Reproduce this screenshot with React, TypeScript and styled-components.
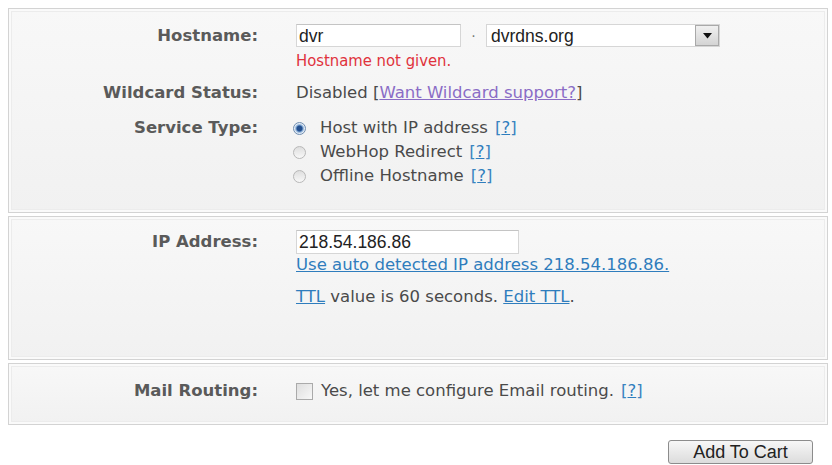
import styled, { createGlobalStyle } from "styled-components";

const GlobalStyle = createGlobalStyle`
  html, body {
    margin: 0;
    padding: 0;
    background: #ffffff;
  }
  body {
    font-family: "DejaVu Sans", Verdana, sans-serif;
    color: #444;
  }
`

const Page = styled.div`
  width: 820px;
  padding: 8px 4px 0 8px;
  display: flex;
  flex-direction: column;
`

const Section = styled.div<{ $top: number; $bottom: number }>`
  border: 1px solid #d3d3d3;
  background: linear-gradient(#f8f8f8, #f1f1f1);
  box-shadow: inset 0 0 0 2px #fafafa, inset 0 0 0 3px #ececec;
  padding: ${p => p.$top}px 0 ${p => p.$bottom}px 0;
  display: flex;
  flex-direction: column;
  gap: 14px;
  & + & {
    margin-top: 3px;
  }
`

const Row = styled.div`
  display: grid;
  grid-template-columns: 249px 1fr;
  column-gap: 38px;
  align-items: start;
`

const Label = styled.div<{ $lh: number }>`
  text-align: right;
  font-weight: bold;
  font-size: 16.5px;
  color: #5a5a5a;
  line-height: ${p => p.$lh}px;
  white-space: nowrap;
`

const Value = styled.div`
  display: flex;
  flex-direction: column;
  font-size: 16.5px;
  line-height: 18px;
  color: #4a4a4a;
  white-space: nowrap;
`

const Line = styled.div<{ $h?: number; $gap?: number }>`
  display: flex;
  align-items: center;
  height: ${p => p.$h ?? 18}px;
  margin-top: ${p => p.$gap ?? 0}px;
`

const TextInput = styled.div<{ $w: number; $h: number }>`
  width: ${p => p.$w}px;
  height: ${p => p.$h}px;
  box-sizing: border-box;
  border: 1px solid #d6d6d6;
  border-top-color: #c4c4c4;
  background: #fff;
  font-family: "Liberation Sans", Arial, sans-serif;
  font-size: 17.5px;
  color: #222;
  padding: 0 0 0 2px;
  display: flex;
  align-items: center;
`

const Dot = styled.span`
  width: 25px;
  text-align: center;
  color: #777;
  font-size: 14px;
`

const Select = styled.div`
  width: 234px;
  height: 23px;
  box-sizing: border-box;
  border: 1px solid #d6d6d6;
  background: #fff;
  display: flex;
  align-items: center;
  justify-content: space-between;
  font-family: "Liberation Sans", Arial, sans-serif;
  font-size: 17.5px;
  color: #222;
  padding-left: 4px;
`

const SelectButton = styled.span`
  width: 24px;
  height: 21px;
  box-sizing: border-box;
  border: 1px solid #a9a9a9;
  background: linear-gradient(#f0f0f0, #d4d4d4);
  display: flex;
  align-items: center;
  justify-content: center;
`

const ErrorText = styled.div`
  margin-top: 5px;
  font-family: "DejaVu Sans Condensed", "DejaVu Sans", sans-serif;
  font-stretch: condensed;
  font-size: 16.5px;
  line-height: 18px;
  color: #e0323c;
`

const Link = styled.a<{ $visited?: boolean }>`
  color: ${p => (p.$visited ? "#8a6cc6" : "#2f7dbd")};
  text-decoration: underline;
  cursor: pointer;
`

const Help = styled.span`
  color: #3a84c0;
  margin-left: 7px;
`

const Radio = styled.span<{ $checked?: boolean }>`
  width: 13px;
  height: 13px;
  box-sizing: border-box;
  border-radius: 50%;
  border: 1px solid ${p => (p.$checked ? "#6f8db0" : "#b8b8b8")};
  background: ${p => (p.$checked ? "radial-gradient(circle, #234f8e 0 2.5px, #7ea5d2 3.5px, #e3ebf4 5px)" : "linear-gradient(#dedede, #f8f8f8)")};
  margin: 0 14px 0 -3px;
  flex: none;
`

const Checkbox = styled.span`
  width: 17px;
  height: 17px;
  box-sizing: border-box;
  border: 1px solid #aaa;
  background: linear-gradient(135deg, #dedede, #f8f8f8);
  margin-right: 8px;
  flex: none;
`

const Footer = styled.div`
  display: flex;
  justify-content: flex-end;
  padding: 15px 15px 0 0;
`

const Button = styled.button`
  width: 145px;
  height: 24px;
  box-sizing: border-box;
  border: 1px solid #8c8c8c;
  border-radius: 3px;
  background: linear-gradient(#f7f7f7, #dcdcdc);
  font-family: "Liberation Sans", Arial, sans-serif;
  font-size: 18px;
  color: #222;
  padding: 0;
  line-height: 20px;
`

const HelpLink = () => (
  <Help>
    [<Link>?</Link>]
  </Help>
)

export default function App() {
  return (
    <>
      <GlobalStyle />
      <Page>
        <Section $top={15} $bottom={24}>
          <Row>
            <Label $lh={23}>Hostname:</Label>
            <Value>
              <Line $h={23}>
                <TextInput $w={165} $h={23}>dvr</TextInput>
                <Dot>·</Dot>
                <Select>
                  dvrdns.org
                  <SelectButton>
                    <svg width="9" height="6" viewBox="0 0 9 6">
                      <path d="M0 0h9L4.5 5.5z" fill="#111" />
                    </svg>
                  </SelectButton>
                </Select>
              </Line>
              <ErrorText>Hostname not given.</ErrorText>
            </Value>
          </Row>
          <Row>
            <Label $lh={18}>Wildcard Status:</Label>
            <Value>
              <Line>
                Disabled&nbsp;[<Link $visited>Want Wildcard support?</Link>]
              </Line>
            </Value>
          </Row>
          <Row>
            <Label $lh={24}>Service Type:</Label>
            <Value>
              <Line $h={24}>
                <Radio $checked />
                Host with IP address
                <HelpLink />
              </Line>
              <Line $h={24}>
                <Radio />
                WebHop Redirect
                <HelpLink />
              </Line>
              <Line $h={24}>
                <Radio />
                Offline Hostname
                <HelpLink />
              </Line>
            </Value>
          </Row>
        </Section>

        <Section $top={13} $bottom={53}>
          <Row>
            <Label $lh={24}>IP Address:</Label>
            <Value>
              <Line $h={24}>
                <TextInput $w={223} $h={24}>218.54.186.86</TextInput>
              </Line>
              <Line $gap={2}>
                <Link>Use auto detected IP address 218.54.186.86.</Link>
              </Line>
              <Line $gap={14}>
                <Link>TTL</Link>&nbsp;value is 60 seconds.&nbsp;<Link>Edit TTL</Link>.
              </Line>
            </Value>
          </Row>
        </Section>

        <Section $top={18} $bottom={24}>
          <Row>
            <Label $lh={18}>Mail Routing:</Label>
            <Value>
              <Line>
                <Checkbox />
                Yes, let me configure Email routing.
                <HelpLink />
              </Line>
            </Value>
          </Row>
        </Section>

        <Footer>
          <Button>Add To Cart</Button>
        </Footer>
      </Page>
    </>
  )
}
